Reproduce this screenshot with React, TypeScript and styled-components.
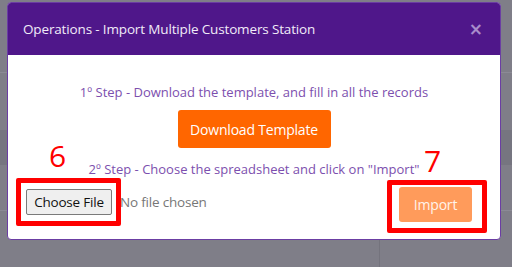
import React from "react";
import styled, { createGlobalStyle } from "styled-components";

const GlobalStyle = createGlobalStyle`
  html, body {
    margin: 0;
    padding: 0;
    background: #7f7e88;
    font-family: "Open Sans", "Noto Sans", sans-serif;
  }
`;

const Page = styled.div`
  position: relative;
  width: 512px;
  height: 267px;
  overflow: hidden;
  display: flex;
  flex-direction: column;
  background: #7f7e88;
`;

// what is left visible of the page under the overlay
const Stripe = styled.div<{ $h: number; $bg?: string; $line?: string }>`
  height: ${(p) => p.$h}px;
  background: ${(p) => p.$bg || "#7f7e88"};
  border-bottom: ${(p) => (p.$line ? `1px solid ${p.$line}` : "none")};
  flex-shrink: 0;
`;

const BottomStripe = styled.div`
  flex: 1;
  display: grid;
  grid-template-columns: 380px 1fr;
  & > div:first-child {
    border-right: 1px solid #74737d;
  }
`;

const Modal = styled.div`
  position: absolute;
  left: 7px;
  top: 2px;
  width: 494px;
  height: 238px;
  box-sizing: border-box;
  border: 1px solid #6b3ea3;
  border-radius: 4px;
  background: #fff;
  overflow: hidden;
  display: flex;
  flex-direction: column;
`;

const Header = styled.div`
  height: 52px;
  background: #4f178a;
  display: flex;
  align-items: center;
  justify-content: space-between;
  padding: 0 17px 0 15px;
  flex-shrink: 0;
`;

const Title = styled.div`
  color: #f1ebf8;
  font-size: 13.5px;
  letter-spacing: -0.15px;
`;

const Close = styled.span`
  color: #a88ccb;
  font-family: "DejaVu Sans", sans-serif;
  font-weight: bold;
  font-size: 17px;
  line-height: 1;
  margin-top: 1px;
`;

const Body = styled.div`
  flex: 1;
  display: flex;
  flex-direction: column;
  align-items: center;
  padding: 28px 28px 0 18px;
`;

const StepText = styled.div<{ $mt?: number }>`
  color: #7c4fae;
  font-size: 13px;
  line-height: 18px;
  margin-top: ${(p) => p.$mt || 0}px;
  text-align: center;
  align-self: stretch;
  padding-left: 10px;
`;

const OrangeButton = styled.button<{ $disabled?: boolean }>`
  border: none;
  border-radius: 3px;
  background: ${(p) => (p.$disabled ? "#ff9b5b" : "#ff6600")};
  color: ${(p) => (p.$disabled ? "#fff3ea" : "#fff")};
  font-family: "Open Sans", sans-serif;
  font-size: 14px;
  letter-spacing: -0.2px;
  padding: 0;
  cursor: pointer;
`;

const DownloadButton = styled(OrangeButton)`
  width: 153px;
  height: 38px;
  margin-top: 9px;
  margin-left: 10px;
`;

const FileRow = styled.div`
  align-self: stretch;
  display: flex;
  align-items: center;
  justify-content: space-between;
  margin-top: 9px;
`;

const FilePicker = styled.div`
  display: flex;
  align-items: center;
  gap: 8px;
  margin-top: -5px;
`;

const ChooseButton = styled.button`
  width: 86px;
  height: 26px;
  box-sizing: border-box;
  border: 1px solid #7a7a7a;
  border-radius: 2px;
  background: #efefef;
  color: #111;
  font-family: "Open Sans", sans-serif;
  font-size: 13.5px;
  letter-spacing: -0.2px;
  padding: 0;
`;

const NoFile = styled.span`
  color: #777;
  font-size: 13.5px;
  letter-spacing: -0.2px;
`;

const ImportButton = styled(OrangeButton)`
  width: 73px;
  height: 35px;
`;

const Mark = styled.div<{ $x: number; $y: number; $w: number; $h: number }>`
  position: absolute;
  left: ${(p) => p.$x}px;
  top: ${(p) => p.$y}px;
  width: ${(p) => p.$w}px;
  height: ${(p) => p.$h}px;
  box-sizing: border-box;
  border: 5px solid #ff0000;
  border-radius: 2px;
`;

const Num = styled.div<{ $x: number; $y: number }>`
  position: absolute;
  left: ${(p) => p.$x}px;
  top: ${(p) => p.$y}px;
  color: #ff0000;
  font-family: "Open Sans", sans-serif;
  font-size: 30px;
  line-height: 30px;
`;

export default function App() {
  return (
    <>
      <GlobalStyle />
      <Page>
        <Stripe $h={72} $line="#8b8a95" />
        <Stripe $h={57} />
        <Stripe $h={35} $bg="#767580" />
        <Stripe $h={45} $line="#8b8a95" />
        <BottomStripe>
          <div />
          <div />
        </BottomStripe>

        <Modal>
          <Header>
            <Title>Operations - Import Multiple Customers Station</Title>
            <Close>×</Close>
          </Header>
          <Body>
            <StepText>1º Step - Download the template, and fill in all the records</StepText>
            <DownloadButton>Download Template</DownloadButton>
            <StepText $mt={12}>2º Step - Choose the spreadsheet and click on "Import"</StepText>
            <FileRow>
              <FilePicker>
                <ChooseButton>Choose File</ChooseButton>
                <NoFile>No file chosen</NoFile>
              </FilePicker>
              <ImportButton $disabled>Import</ImportButton>
            </FileRow>
          </Body>
        </Modal>

        <Num $x={49} $y={141}>6</Num>
        <Mark $x={16} $y={178} $w={105} $h={48} />
        <Num $x={424} $y={146}>7</Num>
        <Mark $x={387} $y={180} $w={100} $h={53} />
      </Page>
    </>
  );
}
